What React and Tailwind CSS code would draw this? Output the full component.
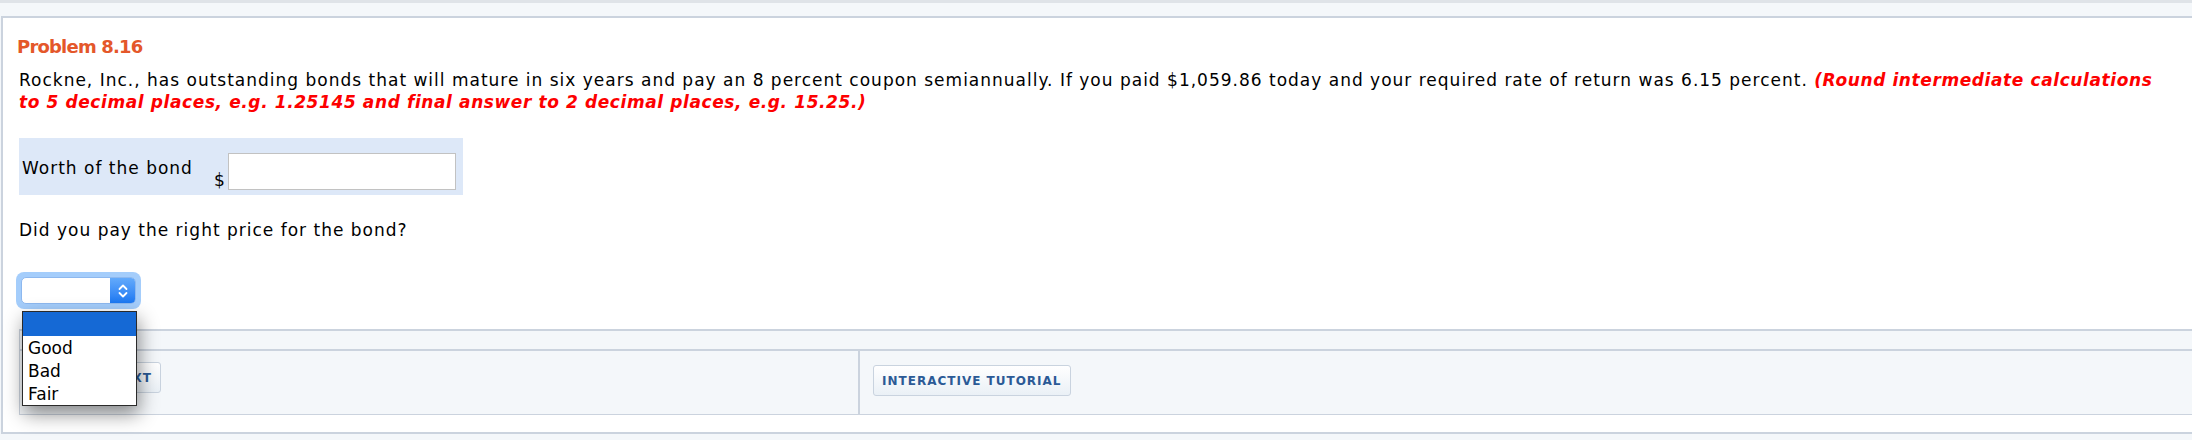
import React from "react";

const verdana = { fontFamily: '"DejaVu Sans", Verdana, sans-serif' };

function FooterButton({ children }) {
  return (
    <button className="h-[31px] px-[8px] rounded-[3px] border border-[#c9d3df] bg-gradient-to-b from-white to-[#eaf0f6] text-[12px] font-bold tracking-[1px] text-[#2b5a96]">
      {children}
    </button>
  );
}

function ChevronPair() {
  return (
    <svg width="12" height="18" viewBox="0 0 12 18" fill="none">
      <path d="M2.5 7L6 3.5L9.5 7" stroke="white" strokeWidth="1.8" strokeLinecap="round" strokeLinejoin="round" />
      <path d="M2.5 11L6 14.5L9.5 11" stroke="white" strokeWidth="1.8" strokeLinecap="round" strokeLinejoin="round" />
    </svg>
  );
}

function OpenSelect() {
  const options = ["Good", "Bad", "Fair"];

  return (
    <div className="relative ml-[13px] mt-[31px] w-[125px]">
      <div className="rounded-[8px] bg-[#a4cdfb] p-[5px]">
        <div className="flex h-[27px] rounded-[5px] border border-[#8db8ef] bg-white overflow-hidden">
          <div className="flex-1" />
          <div className="w-[25px] flex items-center justify-center bg-gradient-to-b from-[#63aafb] to-[#1b78f2]">
            <ChevronPair />
          </div>
        </div>
      </div>

      {/* the open option list sits over the footer */}
      <div className="absolute left-[6px] top-[39px] w-[115px] border border-[#2a2a2a] bg-white shadow-[2px_8px_18px_rgba(0,0,0,0.45)] z-10">
        <div className="h-[24px] bg-[#1569d5]" />
        {options.map((opt) => (
          <div key={opt} className="h-[23px] pl-[5px] text-[17px] leading-[25px] text-black">
            {opt}
          </div>
        ))}
      </div>
    </div>
  );
}

export default function App() {
  return (
    <div className="min-h-screen bg-[#f4f7fa] border-t-[3px] border-[#dfe3e8] pt-[13px] pl-[1px]" style={verdana}>
      <div className="bg-white border-2 border-r-0 border-[#cbd3de] pb-[17px]">

        <h2 className="pl-[14px] pt-[18px] text-[18px] leading-[22px] font-bold tracking-[-0.8px] text-[#e4572a]">
          Problem 8.16
        </h2>

        <p className="pl-[16px] mt-[11px] text-[17px] leading-[22px] tracking-[1px] text-black whitespace-nowrap overflow-hidden">
          Rockne, Inc., has outstanding bonds that will mature in six years and pay an 8 percent coupon semiannually. If you paid $1,059.86 today and your required rate of return was 6.15 percent.{" "}
          <span className="font-bold italic tracking-[0.6px] text-[#fd0000]">
            (Round intermediate calculations
            <br />
            to 5 decimal places, e.g. 1.25145 and final answer to 2 decimal places, e.g. 15.25.)
          </span>
        </p>

        <div className="ml-[16px] mt-[25px] w-[444px] h-[57px] bg-[#dde8f8] flex pl-[3px]">
          <div className="w-[192px] pt-[20px] text-[17px] leading-[20px] tracking-[1px] text-black">
            Worth of the bond
          </div>
          <div className="flex items-end pb-[5px]">
            <span className="text-[17px] leading-[20px] text-black">$</span>
            <input type="text" className="ml-[3px] w-[228px] h-[37px] border border-[#c2c2c2] bg-white outline-none" />
          </div>
        </div>

        <p className="pl-[16px] mt-[24px] text-[17px] leading-[22px] tracking-[1px] text-black">
          Did you pay the right price for the bond?
        </p>

        <OpenSelect />

        <div className="ml-[16px] mt-[20px] border-l border-[#cbd3de] bg-[#f4f7fa]">
          <div className="h-[22px] border-t-2 border-b-2 border-[#cbd3de]" />
          <div className="flex h-[64px] border-b border-[#cbd3de]">
            <div className="w-[838px] pl-[19px] pt-[11px]">
              <FooterButton>LINK TO TEXT</FooterButton>
            </div>
            <div className="flex-1 border-l-2 border-[#cbd3de] pl-[13px] pt-[14px]">
              <FooterButton>INTERACTIVE TUTORIAL</FooterButton>
            </div>
          </div>
        </div>

      </div>
    </div>
  );
}
